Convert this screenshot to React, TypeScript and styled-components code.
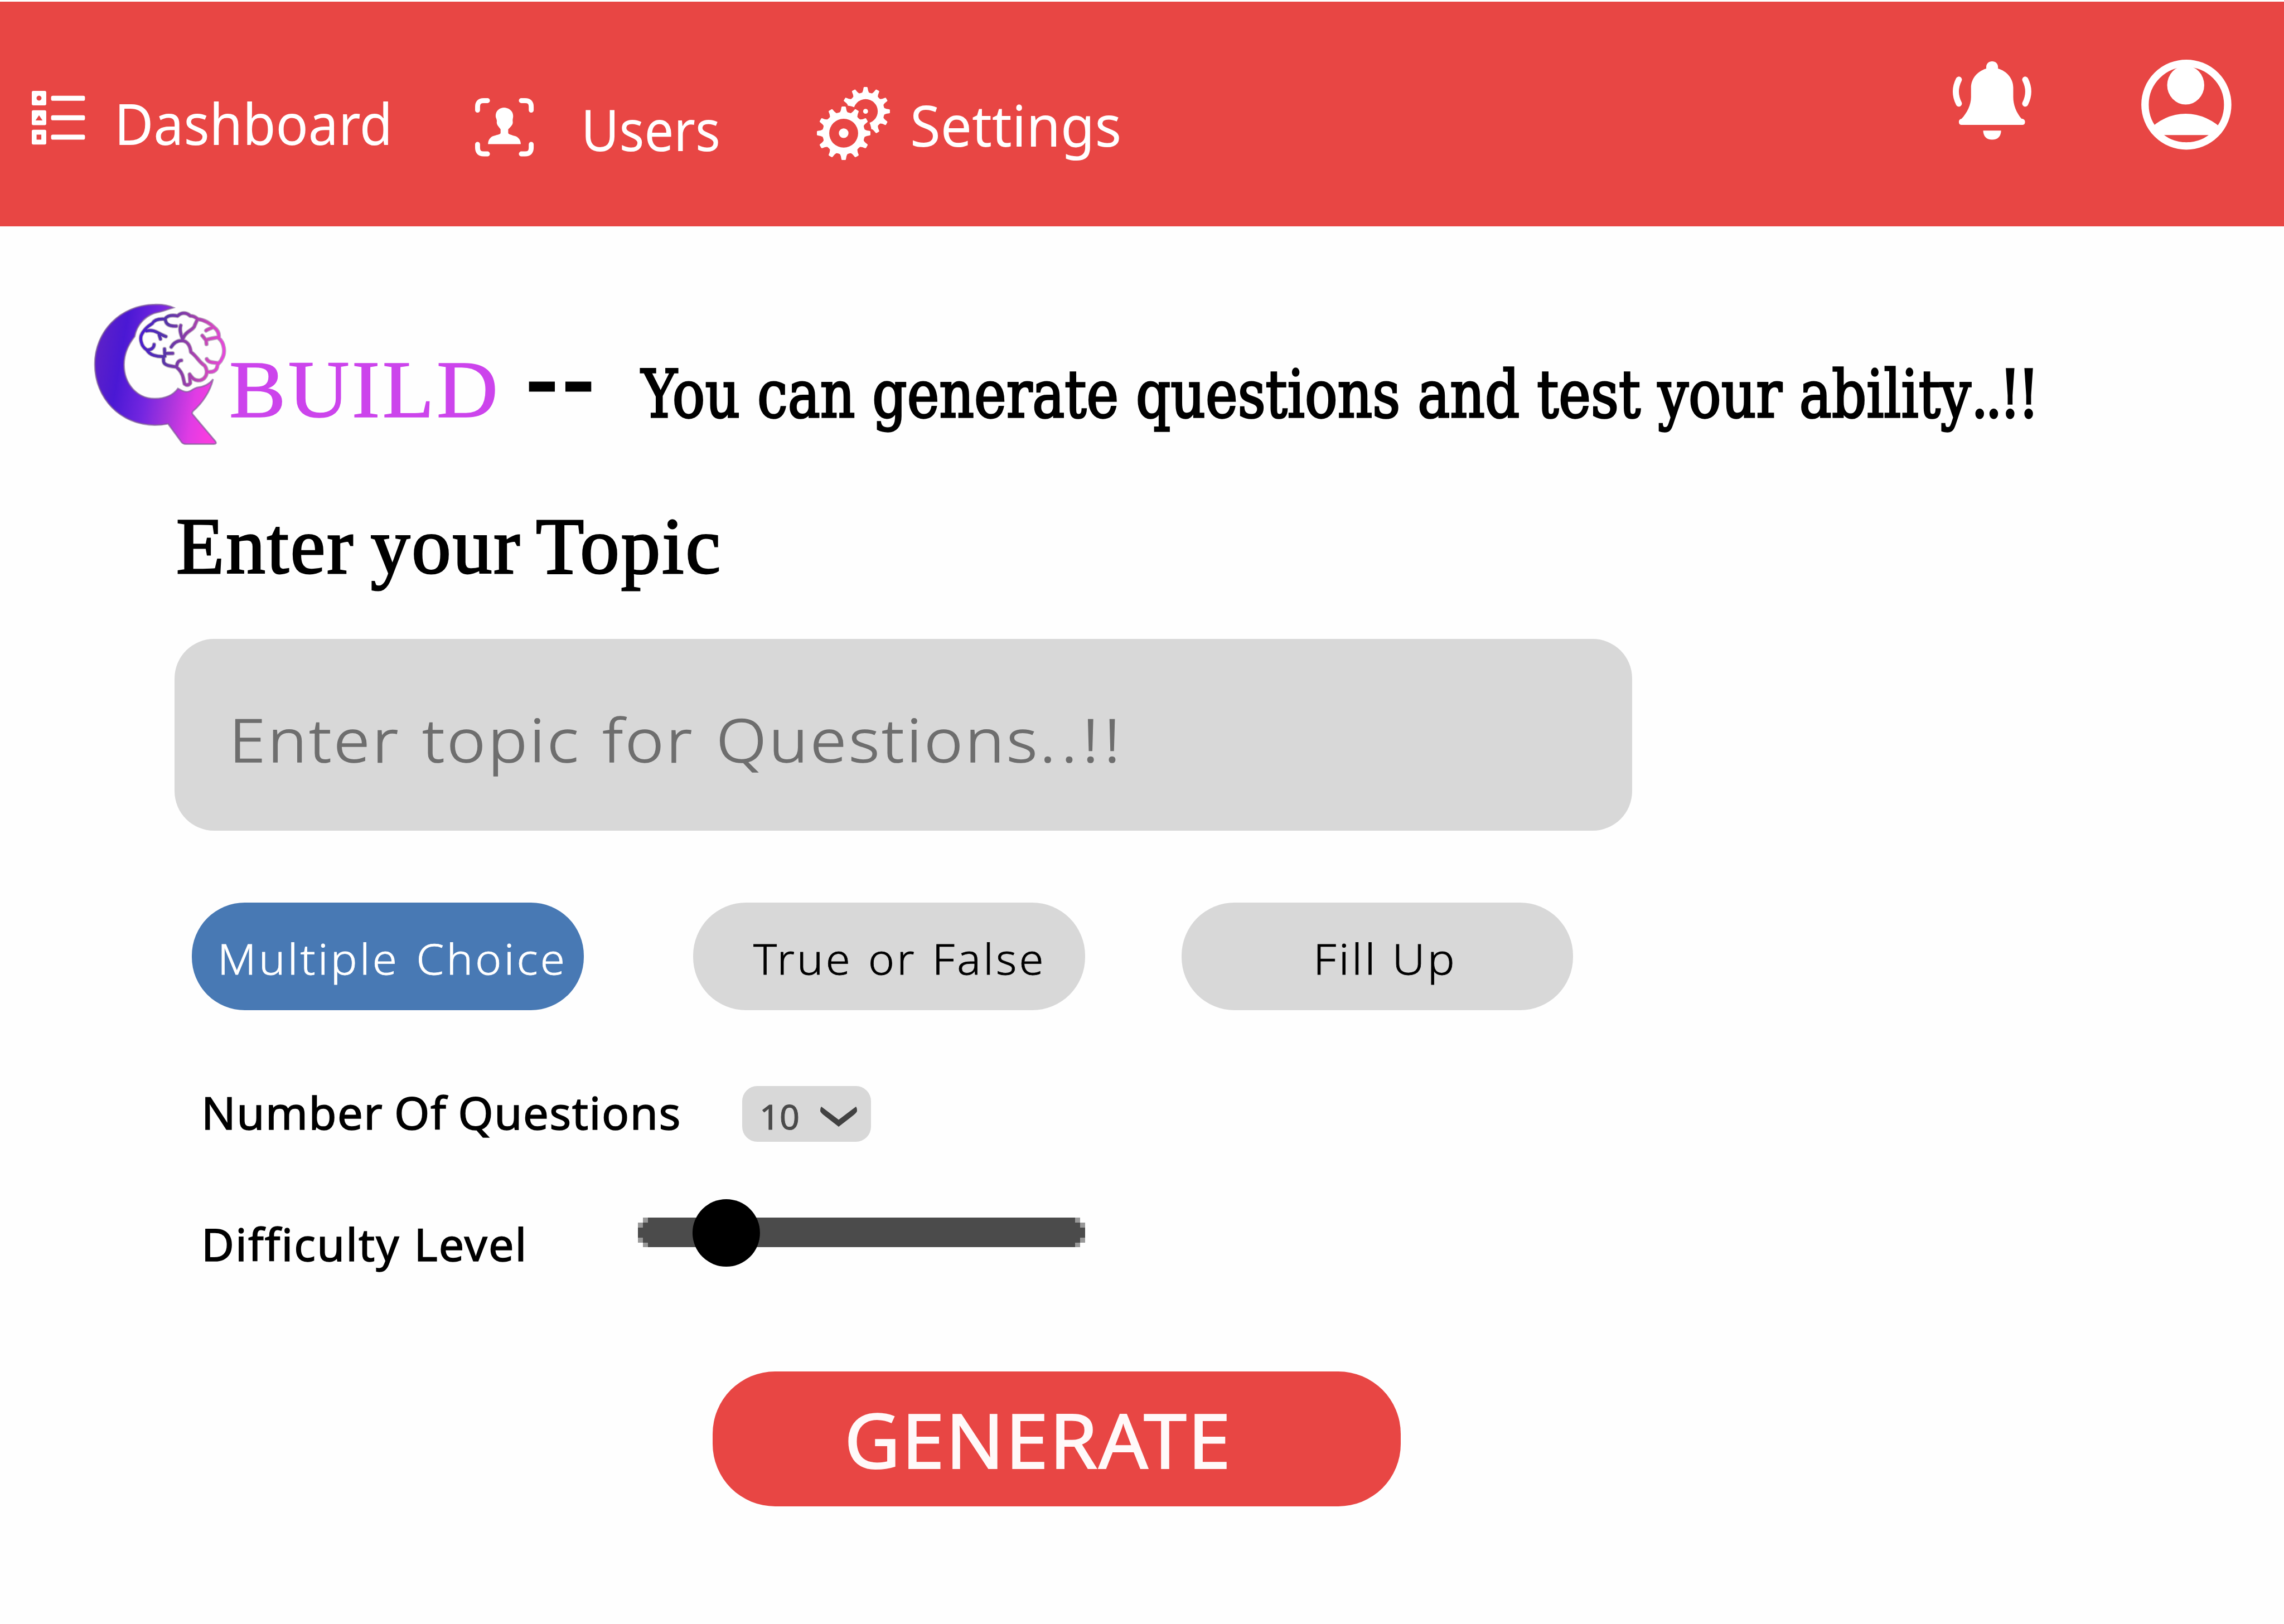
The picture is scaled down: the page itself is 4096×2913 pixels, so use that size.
import React, { useLayoutEffect, useRef, useState } from 'react';
import styled, { createGlobalStyle } from 'styled-components';

const SANS = '"Noto Sans", "Open Sans", sans-serif';
const SERIF = '"Liberation Serif", serif';
const SLAB = '"DejaVu Serif", serif';
const RED = '#e84644';
const GREY = '#d8d8d8';

const GlobalStyle = createGlobalStyle`
  body { margin: 0; background: #fefefe; }
  * { box-sizing: border-box; }
  button { border: 0; padding: 0; margin: 0; font: inherit; }
`;

interface TypeProps {
  $size: number;
  $width: number;
  $font?: string;
  $weight?: number;
  $color?: string;
  $spacing?: number;
  $words?: number;
  $stroke?: number;
  $top?: number;
  $left?: number;
}

const TextBox = styled.div<TypeProps>`
  flex: none;
  width: ${p => p.$width}px;
  height: ${p => p.$size}px;
  margin: ${p => p.$top ?? 0}px 0 0 ${p => p.$left ?? 0}px;
  font-family: ${p => p.$font ?? SANS};
  font-size: ${p => p.$size}px;
  font-weight: ${p => p.$weight ?? 400};
  line-height: ${p => p.$size}px;
  letter-spacing: ${p => p.$spacing ?? 0}px;
  word-spacing: ${p => p.$words ?? 0}px;
  color: ${p => p.$color ?? '#000'};
  -webkit-text-stroke: ${p => p.$stroke ?? 0}px currentColor;
  white-space: nowrap;
  text-align: left;
`;

const TextRun = styled.span`
  display: inline-block;
  transform-origin: 0 50%;
`;

const Tracked = styled.span<{ $by: number }>`
  letter-spacing: ${p => p.$by}px;
`;

/* A single line of type, condensed or expanded to fill its measure. */
function Text({ children, ...rest }: TypeProps & { children: React.ReactNode }) {
  const ref = useRef<HTMLSpanElement>(null);
  const [scale, setScale] = useState(1);
  useLayoutEffect(() => {
    if (ref.current) setScale(rest.$width / ref.current.offsetWidth);
  }, [rest.$width]);
  return (
    <TextBox {...rest}>
      <TextRun ref={ref} style={{ transform: `scaleX(${scale})` }}>{children}</TextRun>
    </TextBox>
  );
}

const Page = styled.div`
  display: flex;
  flex-direction: column;
  width: 4096px;
  height: 2913px;
  overflow: hidden;
  background: #fefefe;
`;

const Header = styled.header`
  display: flex;
  align-items: flex-start;
  flex: none;
  height: 406px;
  padding-right: 94px;
  border-top: 3px solid #fefefe;
  background: ${RED};
`;

const NavItem = styled.a<{ $left: number }>`
  display: flex;
  align-items: flex-start;
  margin-left: ${p => p.$left}px;
`;

const Actions = styled.div`
  display: flex;
  align-items: flex-start;
  gap: 198px;
  margin-left: auto;
`;

const Icon = styled.svg<{ $w: number; $h: number; $top?: number; $left?: number }>`
  display: block;
  flex: none;
  width: ${p => p.$w}px;
  height: ${p => p.$h}px;
  margin: ${p => p.$top ?? 0}px 0 0 ${p => p.$left ?? 0}px;
  overflow: visible;
`;

const Row = styled.div<{ $height: number; $left?: number }>`
  display: flex;
  align-items: flex-start;
  flex: none;
  height: ${p => p.$height}px;
  padding-left: ${p => p.$left ?? 0}px;
`;

const TopicField = styled.div`
  flex: none;
  display: flex;
  width: 2614px;
  height: 344px;
  margin-left: 312.5px;
  border-radius: 71px;
  background: ${GREY};
`;

const Pills = styled.div`
  display: flex;
  flex: none;
  margin: 128.6px 0 0 344.4px;
`;

const Pill = styled.button<{ $active?: boolean; $left?: number }>`
  display: flex;
  align-items: flex-start;
  flex: none;
  width: 702.5px;
  height: 193.6px;
  margin-left: ${p => p.$left ?? 0}px;
  border-radius: 95px;
  background: ${p => (p.$active ? '#4879b4' : GREY)};
`;

const Select = styled.div`
  display: flex;
  align-items: flex-start;
  width: 231px;
  height: 100px;
  margin: 136px 0 0 109.5px;
  border-radius: 27px;
  background: ${GREY};
`;

const Generate = styled.button`
  display: flex;
  align-items: flex-start;
  flex: none;
  width: 1234px;
  height: 242px;
  margin-left: 1277.5px;
  border-radius: 112px;
  background: ${RED};
`;

const ListIcon = () => (
  <Icon $w={95.6} $h={96.3} $top={159.5} viewBox="84 238 140 141" fill="#fff">
    <path fillRule="evenodd" d="M88 238h30q4 0 4 4v30q0 4-4 4H88q-4 0-4-4v-30q0-4 4-4zM103 250.5a6.5 6.5 0 1 0 .01 0z" />
    <path fillRule="evenodd" d="M88 289h30q4 0 4 4v31q0 4-4 4H88q-4 0-4-4v-31q0-4 4-4zM103 302l-9.2 13.5h18.4z" />
    <path fillRule="evenodd" d="M88 340h30q4 0 4 4v31q0 4-4 4H88q-4 0-4-4v-31q0-4 4-4zM96.6 353v13h12.4v-13z" />
    <rect x="134.7" y="250.7" width="89" height="13.3" rx="4.5" />
    <rect x="134.7" y="302" width="89" height="13.3" rx="4.5" />
    <rect x="134.7" y="353" width="89" height="13.3" rx="4.5" />
  </Icon>
);

const UserFrameIcon = () => (
  <Icon $w={105.1} $h={104.5} $top={172.5} viewBox="1248 257 154 153" fill="#fff">
    <path
      d="M1254.5 288.5v-9q0-16 16-16h10M1369.5 263.5h10q16 0 16 16v9M1395.5 378.5v9q0 16-16 16h-10M1280.5 403.5h-10q-16 0-16-16v-9"
      fill="none" stroke="#fff" strokeWidth="13" strokeLinecap="round"
    />
    <path d="M1324 282c10 0 24 7 24 22 0 6-2 9-1 15 1 8-6 13-12 20v10c2 4 8 4 12 6 14 2 21 11 21 23h-86c0-12 7-21 19-23 6-2 12-2 14-6v-10c-5-7-11-12-10-20 1-6-3-9-3-15 0-15 12-22 22-22z" />
  </Icon>
);

function gear(cx: number, cy: number, tip: number, root: number, hole: number) {
  const at = (r: number, deg: number) => {
    const a = (deg * Math.PI) / 180;
    return `${(cx + r * Math.cos(a)).toFixed(2)} ${(cy + r * Math.sin(a)).toFixed(2)}`;
  };
  let d = '';
  for (let i = 0; i < 12; i++) {
    const c = i * 30;
    d += `${i ? 'L' : 'M'}${at(root, c - 10)}Q${at(root + 4, c - 6.5)} ${at(tip - 2, c - 5)}Q${at(tip + 0.5, c - 4.5)} ${at(tip, c - 2.5)}L${at(tip, c + 2.5)}Q${at(tip + 0.5, c + 4.5)} ${at(tip - 2, c + 5)}Q${at(root + 4, c + 6.5)} ${at(root, c + 10)}Q${at(root - 1, c + 15)} ${at(root, c + 20)}`;
  }
  return `${d}ZM${cx - hole} ${cy}a${hole} ${hole} 0 1 0 ${hole * 2} 0a${hole} ${hole} 0 1 0 ${-hole * 2} 0z`;
}

const GearsIcon = () => (
  <Icon $w={131.2} $h={131} $top={153.3} viewBox="2145.7 229 192.2 192" fill="#fff">
    <mask id="behind" maskUnits="userSpaceOnUse" x="2140" y="220" width="210" height="210">
      <rect x="2140" y="220" width="210" height="210" fill="#fff" />
      <circle cx="2216" cy="350.5" r="73.5" fill="#000" />
    </mask>
    <g mask="url(#behind)">
      <path fillRule="evenodd" d={gear(2273.6, 293, 64, 50, 32)} />
    </g>
    <circle cx="2273.6" cy="293" r="6.5" />
    <path fillRule="evenodd" d={gear(2216, 350.5, 70.4, 56, 38)} />
    <circle cx="2216" cy="350.5" r="12.7" />
  </Icon>
);

const BellIcon = () => (
  <Icon $w={140.5} $h={140.7} $top={107} viewBox="5130 161 206 206" fill="#fff">
    <path d="M5218 180v-4c0-9 7-15 15.5-15s15.5 6 15.5 15v4c24 7 40 27 40 50v25c0 20 8 41 22 57 6 0 9 4 9 8 0 5-2 8-6 8h-162c-4 0-6-3-6-8 0-4 2-7 7-8 15-16 25-37 25-57v-25c0-23 16-43 40-50z" />
    <path d="M5210 343h47c0 15-9 24-23.5 24s-23.5-9-23.5-24z" />
    <path d="M5146 209q-16 31.5 0 63M5320.5 209q16 31.5 0 63" fill="none" stroke="#fff" strokeWidth="16" strokeLinecap="round" />
  </Icon>
);

const AvatarIcon = () => (
  <Icon $w={161.8} $h={161.3} $top={104} viewBox="5625.2 157 237 236.3" fill="#fff">
    <clipPath id="disc"><circle cx="5743.7" cy="275.2" r="110" /></clipPath>
    <circle cx="5743.7" cy="275.2" r="108.6" fill="none" stroke="#fff" strokeWidth="19.5" />
    <g clipPath="url(#disc)">
      <ellipse cx="5742" cy="224" rx="48.7" ry="51" />
      <path d="M5640 355L5640 346Q5686 299 5742 299T5846 346L5846 355z" />
    </g>
  </Icon>
);

const LogoMark = () => (
  <Icon $w={241.2} $h={257.1} $top={138} viewBox="130 110 1060 1130">
    <defs>
      <linearGradient id="q" gradientUnits="userSpaceOnUse" x1="145" y1="600" x2="1100" y2="760">
        <stop offset="0" stopColor="#5c20c8" />
        <stop offset=".2" stopColor="#4a18d4" />
        <stop offset=".45" stopColor="#7426e0" />
        <stop offset=".65" stopColor="#a634dc" />
        <stop offset=".85" stopColor="#e03ce4" />
        <stop offset="1" stopColor="#f83ce0" />
      </linearGradient>
      <linearGradient id="brain" gradientUnits="userSpaceOnUse" x1="500" y1="400" x2="1160" y2="460">
        <stop offset="0" stopColor="#4a1cd0" />
        <stop offset=".3" stopColor="#5434a8" />
        <stop offset=".55" stopColor="#8c3ca8" />
        <stop offset=".8" stopColor="#c848b8" />
        <stop offset="1" stopColor="#e448d8" />
      </linearGradient>
    </defs>
    <path
      d="M768 144C720 122 670 118 620 120C350 124 148 330 148 592C148 860 350 1068 620 1070C660 1070 695 1066 725 1060L830 1203Q842 1220 865 1220H1085Q1112 1220 1098 1198L918 985Q912 974 920 962C1000 895 1058 800 1080 708C1050 748 1010 768 950 775C915 785 905 808 870 808C845 806 830 794 803 782C765 835 700 862 620 862C480 862 378 745 378 595C378 500 420 425 462 372C480 270 560 195 650 180C690 172 725 158 768 144Z"
      fill="url(#q)" stroke="#7c5a94" strokeOpacity=".65" strokeWidth="13"
    />
    <g fill="none" strokeLinecap="round" strokeLinejoin="round">
      {[{ c: '#8a7494', o: 0.55, w: 34 }, { c: 'url(#brain)', o: 1, w: 22 }].map(s => (
        <g key={s.w} stroke={s.c} strokeOpacity={s.o} strokeWidth={s.w}>
          <path d="M700 235C722 200 775 205 800 210C830 180 870 180 900 210C925 208 940 218 960 235C1010 240 1060 270 1090 302C1120 325 1130 350 1124 385C1168 420 1180 500 1148 550C1138 580 1115 580 1114 600C1110 650 1070 655 1030 650C1030 690 1000 720 960 718C930 715 915 700 895 670L900 740Q880 765 855 745L845 700C835 650 800 620 790 612C740 605 695 600 690 570L688 530C640 532 580 520 558 478C510 450 500 380 520 350C550 300 570 290 600 270C620 235 665 232 700 235ZM704 240C708 280 740 292 790 290M825 285C810 330 835 370 842 405M845 385C860 330 930 320 935 285L955 240M1080 300C1060 308 1040 312 1025 325M1120 378C1085 385 1050 388 1025 400M995 365L1025 402L1028 432M555 328C620 312 650 352 708 372M655 358L665 392M558 478C592 478 614 462 615 435M697 470L700 528M700 506L762 505M750 455C770 420 800 404 835 404C880 408 900 450 905 495C950 525 970 575 1012 600C1026 618 1030 635 1030 655M1030 550C1045 582 1090 575 1118 582M792 612C795 580 808 560 830 560" />
        </g>
      ))}
    </g>
  </Icon>
);

const Slider = () => (
  <Icon $w={802} $h={121} $top={41} $left={198} viewBox="0 0 802 121" shapeRendering="crispEdges">
    <path fill="#989898" d="M9 32.5H793V41.5H802V77.5H793V86H9V77.5H0V41.5H9z" />
    <path fill="#4b4b4b" d="M18 32.5H784V41.5H793V50.5H802V68.5H793V77.5H784V86H18V77.5H9V68.5H0V50.5H9V41.5H18z" />
    <circle cx="158.4" cy="60.5" r="60.5" shapeRendering="auto" />
  </Icon>
);

export default function App() {
  return (
    <>
      <GlobalStyle />
      <Page>
        <Header>
          <NavItem $left={57.4}>
            <ListIcon />
            <Text $size={102} $width={499} $top={167} $left={52} $color="#fff">Dashboard</Text>
          </NavItem>
          <NavItem $left={148}>
            <UserFrameIcon />
            <Text $size={102} $width={250} $top={178} $left={85} $color="#fff">Users</Text>
          </NavItem>
          <NavItem $left={172.8}>
            <GearsIcon />
            <Text $size={102} $width={379} $top={170} $left={36} $color="#fff">Settings</Text>
          </NavItem>
          <Actions>
            <BellIcon />
            <AvatarIcon />
          </Actions>
        </Header>

        <Row $height={474} $left={166.1}>
          <LogoMark />
          <Text $font={SERIF} $size={146} $width={486} $spacing={4} $stroke={1.5} $top={220} $left={3.7} $color="#cc44ec">BUILD</Text>
          <Text $font={SERIF} $size={175} $weight={700} $width={131} $spacing={10} $stroke={3} $top={183} $left={47}>--</Text>
          <Text $font={SLAB} $size={118} $width={2502} $stroke={3.5} $top={242} $left={75.5}>You can generate questions and test your ability<Tracked $by={-7}>..!!</Tracked></Text>
        </Row>

        <Row $height={266} $left={316}>
          <Text $font={SERIF} $size={144} $width={979} $spacing={3} $words={-10} $stroke={3} $top={28}>Enter your Topic</Text>
        </Row>

        <TopicField>
          <Text $size={107.6} $width={1608} $weight={300} $spacing={4} $words={4} $stroke={1.5} $top={126} $left={98.5} $color="#6e6e6e">Enter topic for Questions<Tracked $by={9}>..!!</Tracked></Text>
        </TopicField>

        <Pills>
          <Pill $active>
            <Text $size={75} $width={627} $weight={300} $spacing={4} $words={5} $stroke={0.8} $top={63} $left={45.5} $color="#fff">Multiple Choice</Text>
          </Pill>
          <Pill $left={196.5}>
            <Text $size={75} $width={525} $weight={300} $spacing={4} $words={3} $stroke={0.8} $top={63} $left={107.5}>True or False</Text>
          </Pill>
          <Pill $left={173}>
            <Text $size={75} $width={258} $weight={300} $spacing={4} $stroke={0.8} $top={63} $left={236}>Fill Up</Text>
          </Pill>
        </Pills>

        <Row $height={298} $left={360.5}>
          <Text $size={81} $width={861} $spacing={1.5} $words={-3} $stroke={1.5} $top={142}>Number Of Questions</Text>
          <Select>
            <Text $size={62} $width={72} $stroke={1} $top={22.5} $left={31} $color="#4a4a4a">10</Text>
            <Icon $w={66} $h={36} $top={37} $left={37} viewBox="0 0 66 36">
              <path d="M2 0L33 23.5L64 0Q66 2 66 8Q65 11 60 15L33 36L6 15Q1 11 0 8Q0 2 2 0z" fill="#424242" />
            </Icon>
          </Select>
        </Row>

        <Row $height={350} $left={360.5}>
          <Text $size={81} $width={585} $spacing={2} $words={2} $stroke={1.5} $top={79.5}>Difficulty Level</Text>
          <Slider />
        </Row>

        <Generate>
          <Text $size={135} $width={695} $spacing={2} $stroke={2} $top={55} $left={236} $color="#fff9f9">GENERATE</Text>
        </Generate>
      </Page>
    </>
  );
}
